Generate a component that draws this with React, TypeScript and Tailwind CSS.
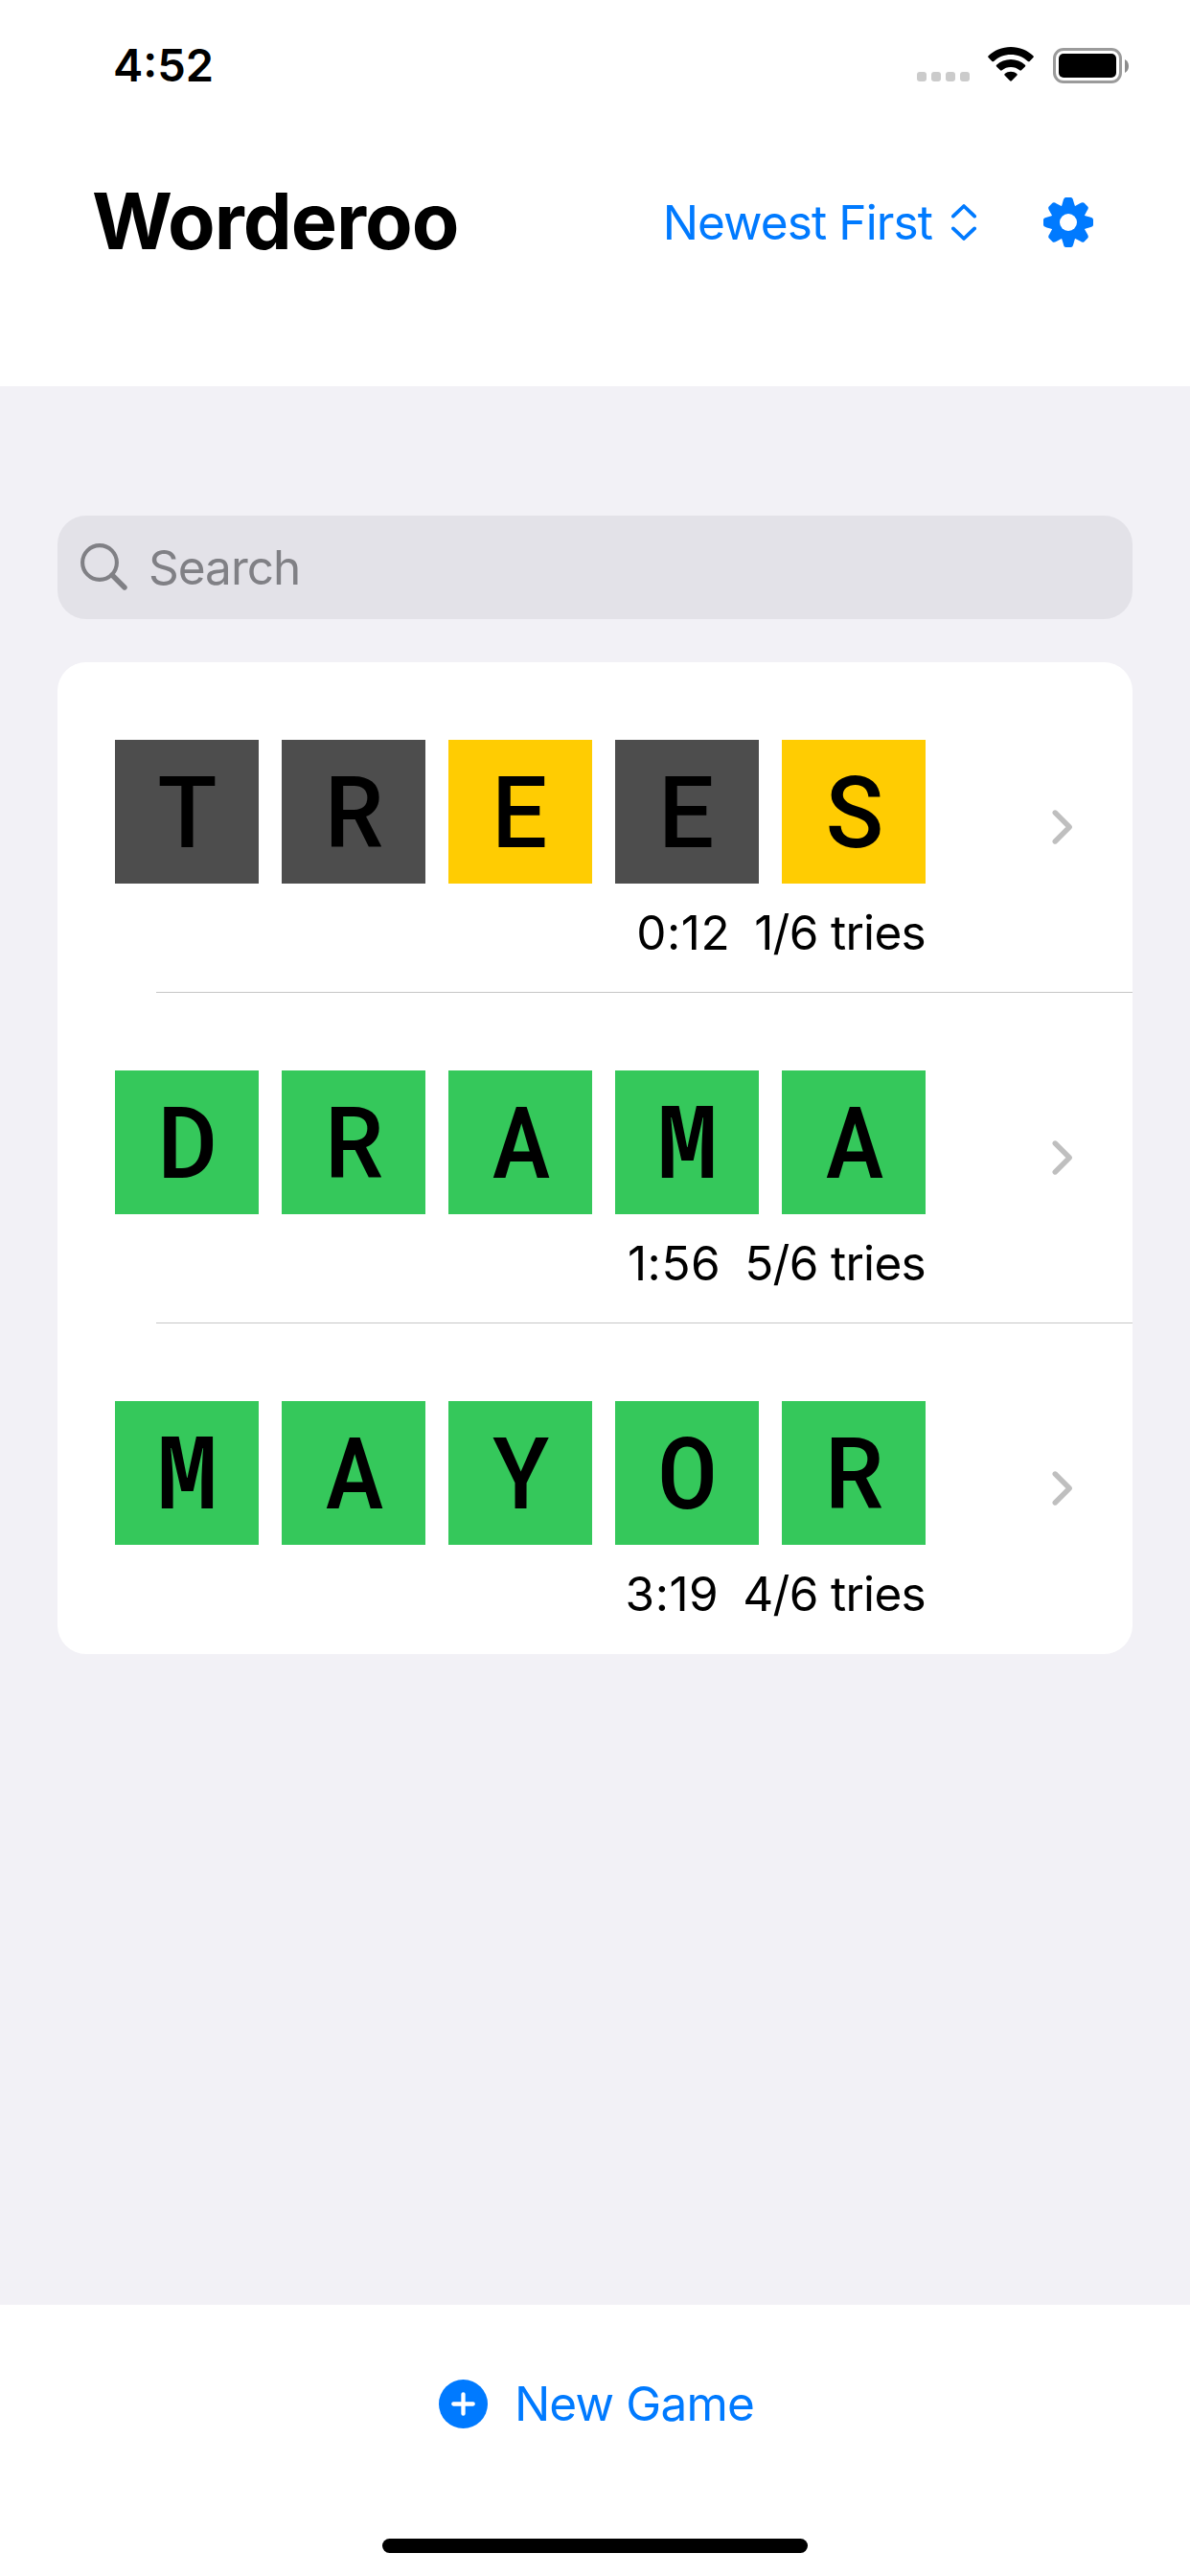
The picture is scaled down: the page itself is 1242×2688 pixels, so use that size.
const tileColors = {
  miss: "bg-[#4d4d4d]",
  near: "bg-[#ffcc02]",
  hit: "bg-[#35c85b]",
};

type Mark = keyof typeof tileColors;

type Game = {
  word: string;
  marks: Mark[];
  time: string;
  tries: string;
};

const allHit: Mark[] = ["hit", "hit", "hit", "hit", "hit"];

const games: Game[] = [
  { word: "TREES", marks: ["miss", "miss", "near", "miss", "near"], time: "0:12", tries: "1/6 tries" },
  { word: "DRAMA", marks: allHit, time: "1:56", tries: "5/6 tries" },
  { word: "MAYOR", marks: allHit, time: "3:19", tries: "4/6 tries" },
];

function StatusBar() {
  return (
    <div className="flex h-[136px] items-center pl-[118px] pr-[64px]">
      <span className="mt-[-2px] text-[47px] leading-none font-semibold">4:52</span>
      <div className="ml-auto flex items-center">
        <div className="mt-[24px] flex gap-[5px]">
          {[0, 1, 2, 3].map((dot) => (
            <span key={dot} className="size-[10px] rounded-[3px] bg-[#cbcbcb]" />
          ))}
        </div>
        <svg className="mt-[-2px] ml-[19px] h-[36px] w-[48px]" viewBox="0 0 48 36">
          <path d="M24 0C33.200 0 41.500 3.500 47.400 9.300Q48.200 10.200 47.400 11.100L43.600 14.900Q42.700 15.700 41.800 14.900C37.100 10.500 30.900 7.900 24 7.900S10.900 10.500 6.200 14.900Q5.300 15.700 4.400 14.900L.6 11.100Q-.2 10.200 .6 9.300C6.500 3.500 14.800 0 24 0Z" />
          <path d="M24 13.100C29.700 13.100 34.900 15.200 38.900 18.700Q39.800 19.600 38.900 20.500L35 24.300Q34.100 25.100 33.200 24.300C30.700 22.200 27.500 21 24 21S17.300 22.200 14.800 24.300Q13.900 25.100 13 24.300L9.100 20.500Q8.200 19.600 9.100 18.700C13.100 15.200 18.300 13.100 24 13.100Z" />
          <path d="M24 25.800C26.400 25.800 28.600 26.600 30.300 28Q31.200 28.800 30.300 29.700L24.900 35.200Q24 36.100 23.100 35.200L17.700 29.700Q16.800 28.800 17.700 28C19.400 26.600 21.600 25.800 24 25.800Z" />
        </svg>
        <div className="ml-[20px] flex h-[37px] w-[72px] rounded-[11px] border-[3px] border-[#9b9b9b] p-[3px]">
          <span className="flex-1 rounded-[5px] bg-black" />
        </div>
        <svg className="mt-[1px] ml-[3px] h-[14px] w-[4px]" viewBox="0 0 4 14">
          <path d="M0 0C2.600 1.400 4 3.900 4 7S2.600 12.600 0 14Z" fill="#8c8c8c" />
        </svg>
      </div>
    </div>
  );
}

function SortIcon() {
  return (
    <svg className="h-[38px] w-[26px]" viewBox="0 0 26 38" fill="none" stroke="currentColor" strokeWidth="3.800" strokeLinecap="round" strokeLinejoin="round">
      <path d="M1.900 12.600L13 2L24.100 12.600M1.900 25.400L13 36L24.100 25.400" />
    </svg>
  );
}

const toothAngles = [0, 45, 90, 135, 180, 225, 270, 315];

function GearIcon() {
  return (
    <svg className="size-[52px]" viewBox="-26 -26 52 52" fill="currentColor">
      {toothAngles.map((angle) => (
        <path
          key={angle}
          transform={`rotate(${angle})`}
          d="M-7.500 -15L-5.400 -22.500Q-4.600 -26 -2.600 -26H2.600Q4.600 -26 5.200 -22.500L7.500 -15Z"
        />
      ))}
      <circle r="18.500" />
      <circle r="9" fill="#fff" />
    </svg>
  );
}

function Header() {
  return (
    <header className="flex h-[191px] items-start pr-[101px] pl-[96px] text-[#007aff]">
      <h1 className="h-[191px] text-[81px] leading-[191px] font-bold tracking-[-1px] text-black">Worderoo</h1>
      <div className="ml-auto flex h-[192px] items-center">
        <span className="mr-[20px] text-[49.500px] leading-[60px] tracking-[-0.900px]">Newest First</span>
        <SortIcon />
        <span className="ml-[70px]">
          <GearIcon />
        </span>
      </div>
    </header>
  );
}

function SearchField() {
  return (
    <div className="flex h-[108px] items-center rounded-[30px] bg-[#e3e2e8] pl-[24px] text-[#808085]">
      <svg className="mt-[-1px] size-[49px]" viewBox="0 0 49 49" fill="none" stroke="currentColor">
        <circle cx="20" cy="20" r="17.900" strokeWidth="4.100" />
        <path d="M33 33L46 46" strokeWidth="5.400" strokeLinecap="round" />
      </svg>
      <span className="ml-[22px] text-[49.500px] leading-[60px] tracking-[-1px]">Search</span>
    </div>
  );
}

function Tile({ letter, mark }: { letter: string; mark: Mark }) {
  const face =
    letter === "M"
      ? "font-['Noto_Sans_Mono','Roboto_Mono','Roboto',monospace] font-semibold"
      : "font-['Roboto_Mono','Noto_Sans_Mono','Roboto',monospace] font-medium";
  return (
    <span className={`flex size-[150px] items-center justify-center pb-[7px] pl-px text-[104px] leading-none ${face} ${tileColors[mark]}`}>
      {letter}
    </span>
  );
}

function GameRow({ game, last }: { game: Game; last: boolean }) {
  return (
    <li className="flex h-[345px] flex-col pl-[60px]">
      <div className="flex flex-1 items-center pr-[62px]">
        <div className="flex w-[846px] flex-col self-start pt-[81px]">
          <div className="flex gap-[24px]">
            {game.word.split("").map((letter, i) => (
              <Tile key={i} letter={letter} mark={game.marks[i]} />
            ))}
          </div>
          <div className="mt-[21px] flex justify-end gap-[25px] text-[49.500px] leading-[60px]">
            <span className="tracking-[0.500px]">{game.time}</span>
            <span className="tracking-[-0.700px]">{game.tries}</span>
          </div>
        </div>
        <svg className="mt-[-1px] ml-auto h-[36px] w-[22px]" viewBox="0 0 22 36" fill="none" stroke="#bfbfbf" strokeWidth="5.400" strokeLinecap="round" strokeLinejoin="round">
          <path d="M3.200 3L18.200 18L3.200 33" />
        </svg>
      </div>
      <div className={last ? "h-px" : "ml-[43px] h-px bg-[#c6c6c6]"} />
    </li>
  );
}

export default function App() {
  return (
    <div className="flex h-[2688px] w-[1242px] flex-col overflow-hidden bg-white font-['Inter',sans-serif] text-black">
      <StatusBar />
      <div className="h-[267px]">
        <Header />
      </div>
      <main className="flex-1 bg-[#f2f1f6] px-[60px] pt-[135px]">
        <SearchField />
        <ul className="mt-[45px] rounded-[30px] bg-white">
          {games.map((game, i) => (
            <GameRow key={game.word} game={game} last={i === games.length - 1} />
          ))}
        </ul>
      </main>
      <footer className="flex h-[283px] flex-col items-center bg-white">
        <button className="mt-[73px] flex items-center pl-[3px] text-[#007aff]">
          <svg className="size-[51px]" viewBox="0 0 51 51">
            <circle cx="25.500" cy="25.500" r="25.500" fill="currentColor" />
            <path d="M25.500 15.300V35.700M15.300 25.500H35.700" stroke="#fff" strokeWidth="4.300" strokeLinecap="round" />
          </svg>
          <span className="ml-[28px] text-[49.500px] leading-[60px] tracking-[-0.800px]">New Game</span>
        </button>
        <div className="mt-auto mb-[24px] h-[15px] w-[444px] rounded-full bg-black" />
      </footer>
    </div>
  );
}
